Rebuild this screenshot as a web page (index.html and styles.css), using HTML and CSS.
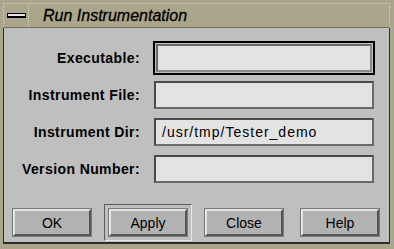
FILE: index.html
```html
<!DOCTYPE html>
<html lang="en">
<head>
	<meta charset="UTF-8">
	<title>Run Instrumentation</title>
	<link rel="stylesheet" href="styles.css">
</head>
<body>
	<div class="window">
		<div class="titlebar">
			<div class="menu_btn"><span class="bar"></span></div>
			<div class="title">Run Instrumentation</div>
		</div>

		<div class="content">
			<div class="form">
				<label class="label">Executable:</label>
				<div class="field focused"></div>

				<label class="label">Instrument File:</label>
				<div class="field"></div>

				<label class="label">Instrument Dir:</label>
				<div class="field">/usr/tmp/Tester_demo</div>

				<label class="label">Version Number:</label>
				<div class="field"></div>
			</div>

			<div class="buttons">
				<div class="btn_slot"><button class="btn">OK</button></div>
				<div class="btn_slot default"><button class="btn">Apply</button></div>
				<div class="btn_slot"><button class="btn">Close</button></div>
				<div class="btn_slot"><button class="btn">Help</button></div>
			</div>
		</div>
	</div>
</body>
</html>
```

FILE: styles.css
```css
body{
	margin: 0;
	font-family: "Liberation Sans", Arial, sans-serif;
}
.window{
	width: 394px;
	height: 249px;
	box-sizing: border-box;
	background-color: #aaa68b;
	padding: 3px 4px 5px 3px;
	display: flex;
	flex-direction: column;
}
.titlebar{
	display: flex;
	height: 25px;
	box-sizing: border-box;
	border: 1px dotted #d6d3bd;
	border-bottom: solid 1px #6f6c5a;
}
.menu_btn{
	width: 24px;
	border-right: 1px dotted #d6d3bd;
	display: flex;
	align-items: center;
	justify-content: center;
}
.menu_btn .bar{
	display: block;
	width: 17px;
	height: 2px;
	background-color: #e8e6d8;
	border: solid 1px #000;
	border-bottom-width: 2px;
}
.title{
	font-style: italic;
	font-size: 16px;
	color: #000;
	padding-left: 14px;
	line-height: 23px;
	-webkit-text-stroke: 0.3px #000;
}
.content{
	flex: 1;
	background-color: #bfbfbf;
	border: solid 1px #2c2c2c;
	border-top: none;
	border-bottom-width: 2px;
	display: flex;
	flex-direction: column;
}
.form{
	display: grid;
	grid-template-columns: 136px 220px;
	grid-auto-rows: 28px;
	column-gap: 14px;
	row-gap: 9px;
	margin-top: 16px;
}
.label{
	font-weight: bold;
	font-size: 14px;
	letter-spacing: 0.4px;
	color: #000;
	text-align: right;
	align-self: center;
}
.field{
	box-sizing: border-box;
	background-color: #e3e3e3;
	border: solid 2px;
	border-color: #4a4a4a #6a6a6a #6a6a6a #4a4a4a;
	font-size: 14px;
	letter-spacing: 1px;
	line-height: 24px;
	padding-left: 6px;
	color: #000;
}
.field.focused{
	width: 216px;
	margin-left: 2px;
	border-color: #6a6a6a #8a8a8a #8a8a8a #6a6a6a;
	outline: solid 2px #000;
	outline-offset: 1px;
}
.buttons{
	display: flex;
	gap: 8px;
	margin-top: auto;
	padding-left: 4px;
	margin-bottom: 1px;
}
.btn_slot{
	padding: 4px;
	border: solid 1px transparent;
}
.btn_slot.default{
	border-color: #5c5c5c #e6e6e6 #e6e6e6 #5c5c5c;
}
.btn{
	display: block;
	width: 78px;
	height: 27px;
	box-sizing: border-box;
	background-color: #b2b2b2;
	border: solid 2px;
	border-color: #e6e6e6 #555 #555 #e6e6e6;
	box-shadow: 0 0 0 1px #7a7a7a;
	font-family: "Liberation Sans", Arial, sans-serif;
	font-size: 14px;
	color: #000;
	padding: 0;
}
```
